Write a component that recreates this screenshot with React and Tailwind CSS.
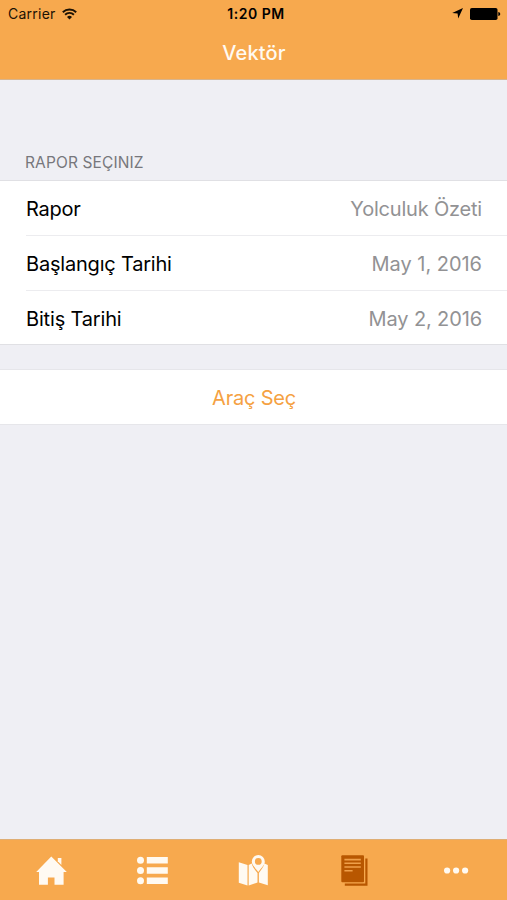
const rows = [
  { label: "Rapor", value: "Yolculuk Özeti", track: "tracking-[-0.22px]", valueTrack: "tracking-[-0.2px]" },
  { label: "Başlangıç Tarihi", value: "May 1, 2016", track: "tracking-[-0.2px]", valueTrack: "tracking-[-0.03px]" },
  { label: "Bitiş Tarihi", value: "May 2, 2016", track: "tracking-[-0.17px]", valueTrack: "tracking-[-0.12px]" },
];

function StatusBar() {
  return (
    <div className="grid h-[27px] grid-cols-3 items-center pl-2 pr-[6px] text-[14px] leading-[27px] text-[#1c1204]">
      <div className="flex items-center gap-[6px]">
        <span className="tracking-[0.25px]">Carrier</span>
        <svg width="15" height="12" viewBox="0 0 15 12" fill="none" stroke="currentColor" strokeWidth="1.9">
          <path d="M.8 4.2a9.6 9.6 0 0 1 13.4 0M3.1 6.7a6.3 6.3 0 0 1 8.8 0" />
          <path d="M7.5 11.5 5 9a3.6 3.6 0 0 1 5 0z" fill="currentColor" stroke="none" />
        </svg>
      </div>
      <div className="whitespace-nowrap pl-[3px] text-center font-semibold tracking-[0.5px] text-black">1:20 PM</div>
      <div className="flex items-center justify-end gap-[7px] text-black">
        <svg width="11" height="11" viewBox="0 0 11 11" fill="currentColor">
          <path d="M11 0 6.2 10.5 5.6 5.5.2 5.1z" />
        </svg>
        <svg width="31" height="12" viewBox="0 0 31 12" fill="currentColor">
          <rect x="0" y="0" width="27.5" height="12" rx="1.8" />
          <path d="M28.3 4c2.6.6 2.6 3.6 0 4z" />
        </svg>
      </div>
    </div>
  );
}

function TabBar() {
  return (
    <nav className="grid h-[61px] grid-cols-5 place-items-center border-t border-[#dfae74] bg-[#f7a94e] text-[#fffaf2]">
      <svg width="32" height="32" viewBox="35 854 32 32" fill="currentColor">
        <path d="M51.3 856.6 36.2 871.9H39V884.8H47.9V877.6H54.5V884.8H63.6V871.9H66.8Z" />
        <path d="M57.8 857.9H61.4V864.9L57.8 861.2Z" />
      </svg>
      <svg width="32" height="32" viewBox="136.2 854 32 32" fill="currentColor">
        <circle cx="140.7" cy="860.2" r="3.5" />
        <circle cx="140.7" cy="870.5" r="3.5" />
        <circle cx="140.7" cy="880.8" r="3.5" />
        <path d="M147 857h21v6.4h-21zM147 867.3h21v6.4h-21zM147 877.6h21v6.4h-21z" />
      </svg>
      <svg width="32" height="32" viewBox="237.5 854 32 32" fill="currentColor">
        <path d="M239.3 862.3 248 865v20.5l-8.7-2.8zM249.2 865l3-1.4c.8 3.6 3.2 6.2 5.8 9.5v9.5l-8.8 2.9zM259.4 873.1c2.2-3.1 4.5-5.6 5.5-9.5l3.4 1.4v20.3l-8.9-2.8z" />
        <path fillRule="evenodd" d="M258.8 855a6.5 6.5 0 0 0-6.5 6.5c0 4 3.4 5.8 6.5 10.6 3.1-4.8 6.5-6.6 6.5-10.6a6.5 6.5 0 0 0-6.5-6.5m0 3a3.4 3.4 0 1 1 0 6.8 3.4 3.4 0 0 1 0-6.8" />
      </svg>
      <svg width="32" height="32" viewBox="339 854 32 32" fill="#b85700">
        <rect x="341.3" y="855.2" width="22.7" height="27" rx="1" />
        <path d="M365.3 858.5h2.2v27.2h-22.7v-2.2h20.5z" />
        <path d="M344.4 859.6h16.4M344.4 863.3h16.4M344.4 867h16.4M344.4 870.7h8.2" stroke="#efa04a" strokeWidth="1.6" />
      </svg>
      <svg width="32" height="32" viewBox="440 854 32 32" fill="currentColor">
        <circle cx="447.1" cy="870.5" r="3.1" />
        <circle cx="456.1" cy="870.5" r="3.1" />
        <circle cx="465.1" cy="870.5" r="3.1" />
      </svg>
    </nav>
  );
}

export default function App() {
  return (
    <div className="flex h-[900px] w-[507px] flex-col overflow-hidden bg-[#efeff4] font-['Inter','Liberation_Sans',sans-serif] text-black">
      <header className="h-20 border-b border-[#d8b48c] bg-[#f7a94e]">
        <StatusBar />
        <h1 className="mt-[10px] pl-px text-center text-[20px] font-medium leading-8 tracking-[0.15px] text-[#fffaf2]">Vektör</h1>
      </header>
      <main className="flex-1">
        <h2 className="mt-[72px] h-[28px] pl-[25px] text-[15.5px] leading-[21px] tracking-[0.12px] text-[#77777c]">RAPOR SEÇINIZ</h2>
        <section className="border-y border-[#e0e0e4] bg-white pl-[26px] text-[20px]">
          {rows.map((row) => (
            <div key={row.label} className="flex h-[55px] items-center justify-between border-b border-[#ececef] pr-[25px] pt-0.5 last:h-[53px] last:border-b-0">
              <span className={row.track}>{row.label}</span>
              <span className={`text-[#929294] ${row.valueTrack}`}>{row.value}</span>
            </div>
          ))}
        </section>
        <button className="mt-6 block h-[56px] w-full border-y border-[#e6e6ea] bg-white pl-px pt-px text-center text-[20px] tracking-[-0.2px] text-[#f5a142]">
          Araç Seç
        </button>
      </main>
      <TabBar />
    </div>
  );
}
